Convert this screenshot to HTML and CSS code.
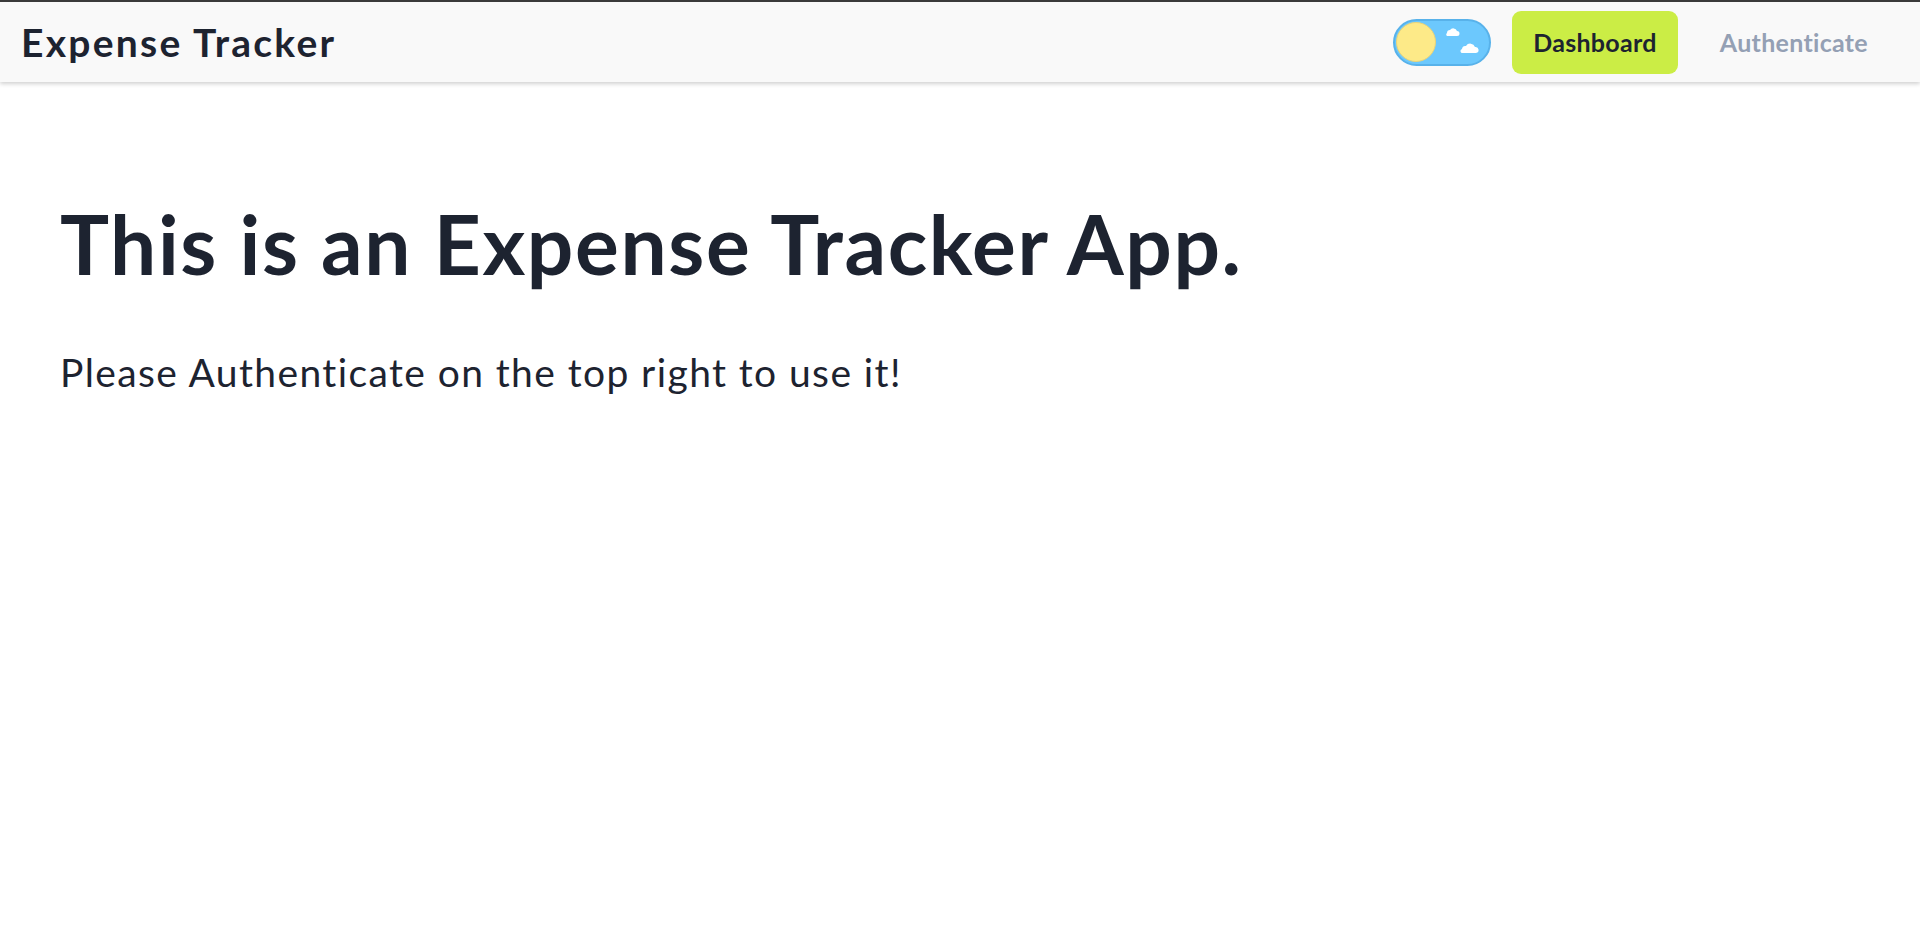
FILE: index.html
```html
<!DOCTYPE html>
<html lang="en">
<head>
<meta charset="utf-8">
<title>Expense Tracker</title>
<link rel="stylesheet" href="styles.css">
</head>
<body>
<header class="navbar">
  <a class="brand" href="#">Expense Tracker</a>
  <nav class="nav-right">
    <label class="theme-toggle" aria-label="Toggle theme">
      <span class="sun"></span>
      <svg class="clouds" width="40" height="34" viewBox="0 0 40 34">
        <path d="M4 8 a3 3 0 0 1 3-3 a4 4 0 0 1 7 1 a2.5 2.5 0 0 1 0 5 h-10 a1.8 1.8 0 0 1 0-3z" fill="#fff"/>
        <path d="M19 24 a3.5 3.5 0 0 1 4-3 a5 5 0 0 1 9 1 a3 3 0 0 1 1 6 h-13 a2 2 0 0 1 -1-4z" fill="#fff"/>
      </svg>
    </label>
    <a class="nav-btn active" href="#">Dashboard</a>
    <a class="nav-btn" href="#">Authenticate</a>
  </nav>
</header>
<main class="hero">
  <h1 class="hero-title">This is an Expense Tracker App.</h1>
  <p class="hero-text">Please Authenticate on the top right to use it!</p>
</main>
</body>
</html>
```

FILE: styles.css
```css
* { box-sizing: border-box; }
html, body { margin: 0; padding: 0; }
body {
  font-family: Lato, "Open Sans", sans-serif;
  color: #1d2330;
  background: #ffffff;
  border-top: 2px solid #3a3a3a;
}
.navbar {
  height: 80px;
  display: flex;
  align-items: center;
  justify-content: space-between;
  padding: 0 31px 0 21px;
  background: #f9f9f9;
  box-shadow: 0 2px 4px rgba(0,0,0,0.18);
}
.brand {
  font-size: 39px;
  font-weight: 700;
  letter-spacing: 2.25px;
  line-height: 1.2;
  color: #1d2330;
  text-decoration: none;
}
.nav-right {
  display: flex;
  align-items: center;
}
.theme-toggle {
  position: relative;
  width: 98px;
  height: 47px;
  border-radius: 24px;
  background: #6cc8fd;
  border: 2px solid #58b2ea;
  margin-right: 21px;
  display: flex;
  align-items: center;
  padding-left: 1px;
}
.sun {
  width: 40px;
  height: 40px;
  border-radius: 50%;
  background: #fdea88;
  border: 1px solid #e8d47a;
}
.clouds {
  position: absolute;
  left: 48px;
  top: 4px;
}
.nav-btn {
  font-size: 25px;
  font-weight: 700;
  letter-spacing: 0.3px;
  text-decoration: none;
  color: #94a0b4;
  padding: 0 21px;
  height: 63px;
  display: flex;
  align-items: center;
  border-radius: 9px;
}
.nav-btn.active {
  background: #cbed45;
  color: #1d2330;
  margin-right: 21px;
}
.hero {
  padding: 112px 60px;
}
.hero-title {
  margin: 0;
  font-size: 82px;
  font-weight: 700;
  letter-spacing: 1.6px;
  line-height: 1.2;
}
.hero-text {
  margin: 57px 0 0;
  font-size: 39px;
  font-weight: 400;
  letter-spacing: 1.4px;
  line-height: 1.2;
}
```
